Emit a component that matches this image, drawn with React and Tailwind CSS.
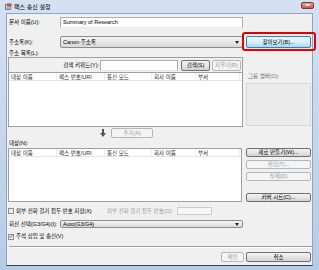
import React from 'react'

const btn = 'flex items-center justify-center rounded-[2px] border border-[#707070] bg-gradient-to-b from-[#f2f2f2] via-[#e6e6e6] to-[#d2d2d2] text-black'
const btnOff = 'flex items-center justify-center rounded-[2px] border border-[#b5b8bb] bg-[#f4f4f4] text-[#9a9a9a]'
const combo = 'flex items-center justify-between rounded-[2px] border border-[#8c8c8c] bg-gradient-to-b from-[#f4f4f4] via-[#e8e8e8] to-[#d8d8d8] pl-[2px] pr-[3px]'

const cols = [
  { name: '대상 이름', w: 'w-[48px]' },
  { name: '팩스 번호/URI', w: 'w-[48px]' },
  { name: '통신 모드', w: 'w-[47px]' },
  { name: '회사 이름', w: 'w-[44px]' },
  { name: '부서', w: 'w-[44px]' },
]

const Header = () => (
  <div className="flex h-[8px] shrink-0 border-b border-[#e5e5e5] bg-white text-[#2b2b2b]">
    {cols.map((c) => (
      <div key={c.name} className={`${c.w} shrink-0 border-r border-[#ececec] pl-[2px] leading-[8px]`}>
        {c.name}
      </div>
    ))}
  </div>
)

const Arrow = () => (
  <svg width="4" height="3" viewBox="0 0 4 3">
    <path d="M0 0h4L2 3z" fill="#222" />
  </svg>
)

const Check = ({ on }) => (
  <div className="flex h-[6px] w-[6px] shrink-0 items-center justify-center border border-[#8f8f8f] bg-gradient-to-br from-[#e0e0e0] to-white">
    {on && (
      <svg width="5" height="5" viewBox="0 0 5 5">
        <path d="M0.8 2.6l1.2 1.2 2.2-3" fill="none" stroke="#2a4a8a" strokeWidth="1" />
      </svg>
    )}
  </div>
)

export default function App() {
  return (
    <div
      className="relative flex h-[270px] w-[319px] flex-col overflow-hidden bg-gradient-to-b from-[#d4e2f2] to-[#b6cbe5] text-[5.5px]"
      style={{ fontFamily: '"Liberation Sans", "Noto Sans CJK KR", sans-serif' }}
    >
      {/* title bar */}
      <div className="flex h-[13px] shrink-0 items-center pl-[5px] pr-[5px]">
        <svg width="7" height="7" viewBox="0 0 7 7" className="shrink-0">
          <rect x="0.5" y="1.5" width="5" height="5" fill="#e8e8e8" stroke="#5a6a80" strokeWidth="0.8" />
          <rect x="2" y="0.5" width="4.5" height="3" fill="#c84a3a" />
          <path d="M1.5 4h3M1.5 5.3h3" stroke="#4a6aa0" strokeWidth="0.6" />
        </svg>
        <span className="ml-[2px] text-[6px] leading-none text-black">팩스 송신 설정</span>
        <div className="ml-auto mt-[-3px] flex h-[7px] w-[13px] items-center justify-center rounded-[2px] border border-[#7a3a3a] bg-gradient-to-b from-[#e8a090] to-[#c45a48]">
          <div className="h-[2px] w-[5px] rounded-[1px] bg-[#f4dcd6]" />
        </div>
      </div>

      {/* client area */}
      <div className="mx-[6px] flex h-[253px] shrink-0 flex-col border border-[#8fa6c2] border-b-[#2d4668] bg-[#f0f0f0] pl-[1px] text-black">
        <div className="mt-[3px] flex h-[11px] items-center">
          <div className="w-[52px] pl-[1px]">문서 이름(U):</div>
          <div className="flex h-full w-[183px] items-center border border-[#abadb3] border-b-[#e3e9ef] bg-white pl-[2px]">
            Summary of Research
          </div>
        </div>

        <div className="mt-[8px] flex h-[12px] items-center">
          <div className="w-[52px] pl-[1px]">주소록(K):</div>
          <div className={`${combo} h-full w-[183px]`}>
            <span>Canon 주소록</span>
            <Arrow />
          </div>
          <div className="ml-[3px] flex h-full w-[65px] items-center justify-center rounded-[2px] border border-[#3c7fb1] bg-gradient-to-b from-[#eaf6fd] via-[#d9f0fc] to-[#a7d9f5]">
            찾아보기(B)...
          </div>
        </div>

        <div className="mt-[2px] h-[7px] pl-[1px] leading-[7px]">주소 목록(L):</div>

        <div className="flex h-[70px]">
          <div className="flex w-[235px] flex-col border border-[#a0a0a0]">
            <div className="flex h-[14px] shrink-0 items-center justify-end pr-[1px]">
              <span className="mr-[1px]">검색 키워드(Y):</span>
              <div className="h-[11px] w-[78px] border border-[#abadb3] border-b-[#e3e9ef] bg-white" />
              <div className={`${btn} ml-[3px] h-[11px] w-[29px]`}>검색(S)</div>
              <div className={`${btnOff} ml-[2px] h-[11px] w-[29px]`}>지우기(R)</div>
            </div>
            <div className="flex flex-1 flex-col border-t border-[#a0a0a0] bg-white">
              <Header />
            </div>
          </div>
          <div className="ml-[3px] flex w-[65px] flex-col">
            <div className="mt-[16px] h-[10px] pl-[2px] leading-[7px] text-[#6d6d6d]">그룹 멤버(O):</div>
            <div className="h-[43px] border border-[#d9d9d9] bg-[#ececec]" />
          </div>
        </div>

        <div className="mt-[1px] flex h-[10px] items-center pl-[92px]">
          <svg width="6" height="8" viewBox="0 0 6 8" className="shrink-0">
            <path d="M2 0h2v4h2L3 8 0 4h2z" fill="#555" />
          </svg>
          <div className={`${btnOff} ml-[5px] h-full w-[42px]`}>추가(A)</div>
        </div>

        <div className="mt-[2px] h-[7px] pl-[1px] leading-[7px]">대상(N):</div>

        <div className="mt-[1px] flex h-[54px]">
          <div className="flex w-[234px] flex-col border border-[#a0a0a0] bg-white">
            <Header />
          </div>
          <div className="ml-[4px] flex w-[65px] flex-col">
            <div className={`${btn} h-[9px]`}>새로 만들기(W)...</div>
            <div className={`${btnOff} mt-[3px] h-[9px]`}>편집(T)...</div>
            <div className={`${btnOff} mt-[3px] h-[9px]`}>삭제(D)</div>
            <div className={`${btn} mt-[12px] h-[9px]`}>커버 시트(C)...</div>
          </div>
        </div>

        <div className="mt-[5px] flex h-[8px] items-center">
          <Check />
          <span className="ml-[2px] w-[91px]">외부 전화 걸기 접두 번호 지정(X)</span>
          <span className="w-[70px] text-[#9a9a9a]">외부 전화 걸기 접두 번호(O):</span>
          <div className="h-full w-[35px] border border-[#c9cdd2] bg-[#f7f7f7]" />
        </div>

        <div className="mt-[5px] flex h-[8px] items-center">
          <div className="w-[52px] pl-[1px]">회선 선택(G3/G4)(I):</div>
          <div className={`${combo} h-full w-[183px]`}>
            <span>Auto(G3/G4)</span>
            <Arrow />
          </div>
        </div>

        <div className="mt-[5px] flex h-[7px] items-center">
          <Check on />
          <span className="ml-[2px]">주석 삽입 및 송신(V)</span>
        </div>

        <div className="ml-[1px] mt-[6px] h-[2px] w-[303px] border-t border-b border-t-[#a0a0a0] border-b-white" />

        <div className="mt-[4px] flex h-[10px]">
          <div className={`${btnOff} ml-[213px] h-full w-[23px]`}>확인</div>
          <div className={`${btn} ml-[2px] h-full w-[65px]`}>취소</div>
        </div>
      </div>

      {/* red highlight drawn over the browse button */}
      <div className="absolute left-[242px] top-[32px] h-[19px] w-[74px] rounded-[3px] border-2 border-[#e30000]" />
    </div>
  )
}
